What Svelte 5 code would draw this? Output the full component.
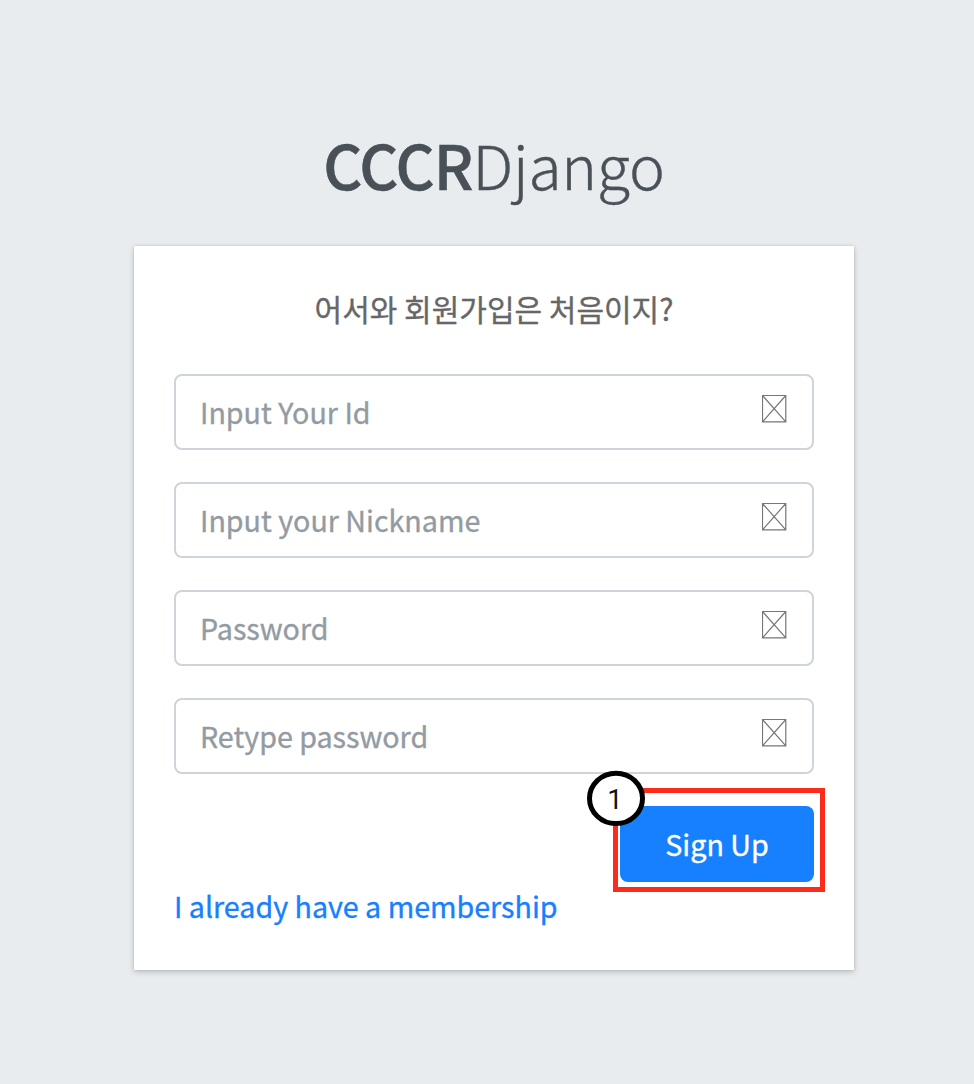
<script>
  const fields = [
    { name: 'id', label: 'Input Your Id', type: 'text' },
    { name: 'nickname', label: 'Input your Nickname', type: 'text' },
    { name: 'password', label: 'Password', type: 'password' },
    { name: 'confirm', label: 'Retype password', type: 'password' }
  ];
</script>

<main>
  <h1><b>CCCR</b><span>Django</span></h1>
  <form class="card" onsubmit={(e) => e.preventDefault()}>
    <p class="message">어서와 회원가입은 처음이지?</p>
    {#each fields as field}
      <label class="field">
        <input type={field.type} name={field.name} placeholder={field.label} />
        <svg class="glyph" width="26" height="28" viewBox="0 0 26 28" aria-hidden="true">
          <path d="M.5 .5H23.8V26.8H.5ZM.5 .5L23.8 26.8M23.8 .5L.5 26.8" />
        </svg>
      </label>
    {/each}
    <div class="actions">
      <div class="submit">
        <button type="submit">Sign Up</button>
        <div class="outline"></div>
        <svg class="marker" width="60" height="58" viewBox="0 0 60 58">
          <ellipse cx="30" cy="29.4" rx="26.5" ry="25.2" />
          <text x="29" y="40" text-anchor="middle">1</text>
        </svg>
      </div>
    </div>
    <a href="#login">I already have a membership</a>
  </form>
</main>

<style>
  :global(body) {
    background: #e8ecef;
  }
  main {
    box-sizing: border-box;
    min-height: 1084px;
    padding: 114px 120px 0 134px;
    background: #e8ecef;
    font-family: 'Noto Sans CJK KR', 'Noto Sans', sans-serif;
    font-size: 28.65px;
    -webkit-text-stroke-width: 0.35px;
  }
  h1 {
    margin: 0;
    height: 132px;
    line-height: 99px;
    text-align: center;
    font-size: 60.6px;
    font-weight: 300;
    letter-spacing: -0.2px;
    color: #495057;
    white-space: nowrap;
  }
  h1 b {
    font-weight: 500;
    letter-spacing: -0.9px;
    -webkit-text-stroke-width: 0.5px;
  }
  .card {
    box-sizing: border-box;
    height: 724px;
    padding: 40px;
    background: #fff;
    box-shadow: 0 0 2px rgba(0, 0, 0, 0.125), 0 2px 6px rgba(0, 0, 0, 0.2);
  }
  .message {
    margin: 0 0 44px;
    height: 44px;
    line-height: 44px;
    text-align: center;
    color: #666;
    font-size: 30px;
    white-space: nowrap;
  }
  .field {
    box-sizing: border-box;
    display: flex;
    align-items: center;
    height: 76px;
    margin-bottom: 32px;
    padding: 0 24px;
    border: 2px solid #ced4da;
    border-radius: 8px;
  }
  input {
    flex: 1;
    min-width: 0;
    height: 60px;
    margin-bottom: 2px;
    padding: 0;
    border: 0;
    outline: 0;
    background: transparent;
    font: inherit;
    color: #495057;
  }
  input::placeholder {
    color: #939ba2;
    opacity: 1;
  }
  .glyph {
    margin-bottom: 6px;
    fill: none;
    stroke: #777;
    stroke-width: 1.2;
  }
  .actions {
    display: flex;
    justify-content: flex-end;
  }
  .submit {
    position: relative;
    width: 194px;
    height: 76px;
  }
  button {
    width: 100%;
    height: 100%;
    padding: 0 0 2px;
    border: 0;
    border-radius: 8px;
    background: #1780ff;
    color: #fff;
    font: inherit;
    -webkit-text-stroke-width: 0.35px;
  }
  .outline {
    position: absolute;
    inset: -18px -11px -10px -7px;
    border: 5px solid #fc2b1c;
  }
  .marker {
    position: absolute;
    left: -34px;
    top: -37px;
  }
  .marker ellipse {
    fill: #fff;
    stroke: #000;
    stroke-width: 5;
  }
  .marker text {
    font: 27.5px Roboto, sans-serif;
    fill: #111;
    -webkit-text-stroke-width: 0;
  }
  a {
    display: block;
    height: 48px;
    line-height: 48px;
    color: #1780ff;
    text-decoration: none;
    white-space: nowrap;
  }
</style>
